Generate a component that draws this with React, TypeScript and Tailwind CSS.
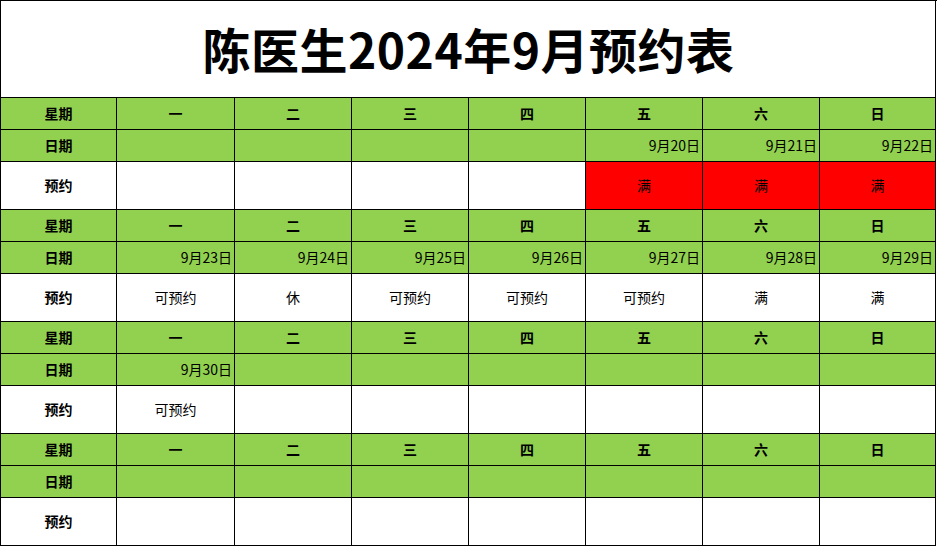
const weekdays = ["一", "二", "三", "四", "五", "六", "日"];

type Day = { date?: string; status?: string; full?: boolean };

const weeks: Day[][] = [
  [{}, {}, {}, {}, { date: "9月20日", status: "满", full: true }, { date: "9月21日", status: "满", full: true }, { date: "9月22日", status: "满", full: true }],
  [
    { date: "9月23日", status: "可预约" },
    { date: "9月24日", status: "休" },
    { date: "9月25日", status: "可预约" },
    { date: "9月26日", status: "可预约" },
    { date: "9月27日", status: "可预约" },
    { date: "9月28日", status: "满" },
    { date: "9月29日", status: "满" },
  ],
  [{ date: "9月30日", status: "可预约" }, {}, {}, {}, {}, {}, {}],
  [{}, {}, {}, {}, {}, {}, {}],
];

const cell = "border-r border-b border-black flex items-center";

export default function App() {
  return (
    <div
      className="w-[937px] h-[546px] bg-white text-black text-[14px]"
      style={{ fontFamily: '"Noto Sans CJK SC", "Noto Sans", sans-serif' }}
    >
      <div className="w-[937px] border-l border-t border-black grid grid-cols-[116px_118px_117px_117px_117px_117px_117px_116px]">
        {/* Title */}
        <div className={`${cell} col-span-8 h-[97px] justify-center`}>
          <h1 className="text-[48px] font-bold leading-none tracking-[0.5px] pl-[1px] pb-[2px]">陈医生2024年9月预约表</h1>
        </div>

        {weeks.map((week, wi) => (
          <div key={wi} className="contents">
            {/* 星期 */}
            <div className={`${cell} h-[32px] justify-center bg-[#92d050] font-bold`}>星期</div>
            {weekdays.map((d) => (
              <div key={d} className={`${cell} h-[32px] justify-center bg-[#92d050] font-bold`}>
                {d}
              </div>
            ))}

            {/* 日期 */}
            <div className={`${cell} h-[32px] justify-center bg-[#92d050] font-bold`}>日期</div>
            {week.map((day, i) => (
              <div key={i} className={`${cell} h-[32px] justify-end pr-[2px] bg-[#92d050]`}>
                {day.date}
              </div>
            ))}

            {/* 预约 */}
            <div className={`${cell} h-[48px] justify-center font-bold`}>预约</div>
            {week.map((day, i) => (
              <div
                key={i}
                className={`${cell} h-[48px] justify-center ${day.full ? "bg-[#ff0000]" : "bg-white"}`}
              >
                {day.status}
              </div>
            ))}
          </div>
        ))}
      </div>
    </div>
  );
}
